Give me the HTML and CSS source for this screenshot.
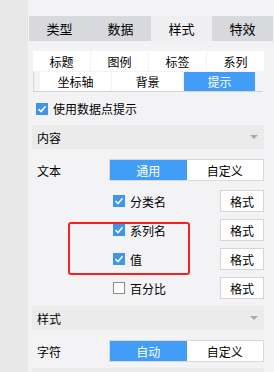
FILE: index.html
```html
<!DOCTYPE html>
<html lang="zh">
<head>
  <meta charset="UTF-8">
  <title>图表属性</title>
  <link rel="stylesheet" href="styles.css">
</head>
<body>
  <div class="layout">
    <div class="side"></div>

    <div class="panel">
      <!-- main tabs -->
      <div class="tabs">
        <div class="tab">类型</div>
        <div class="tab">数据</div>
        <div class="tab active">样式</div>
        <div class="tab">特效</div>
      </div>

      <!-- sub tabs -->
      <div class="subtabs">
        <div class="subrow">
          <div class="subtab">标题</div>
          <div class="subtab">图例</div>
          <div class="subtab">标签</div>
          <div class="subtab">系列</div>
        </div>
        <div class="subrow second">
          <div class="subtab">坐标轴</div>
          <div class="subtab">背景</div>
          <div class="subtab on">提示</div>
        </div>
      </div>

      <label class="check-row">
        <span class="box checked"><svg viewBox="0 0 12 12"><path d="M2.5 6.2 L5 8.6 L9.6 3.2" fill="none" stroke="#fff" stroke-width="1.6"/></svg></span>
        使用数据点提示
      </label>

      <div class="section">内容<span class="caret"></span></div>

      <div class="field">
        <div class="field-label">文本</div>
        <div class="seg">
          <div class="seg-item on">通用</div>
          <div class="seg-item">自定义</div>
        </div>
      </div>

      <div class="opts">
        <div class="opt">
          <label class="opt-check"><span class="box checked"><svg viewBox="0 0 12 12"><path d="M2.5 6.2 L5 8.6 L9.6 3.2" fill="none" stroke="#fff" stroke-width="1.6"/></svg></span>分类名</label>
          <button class="fmt">格式</button>
        </div>
        <div class="opt">
          <label class="opt-check"><span class="box checked"><svg viewBox="0 0 12 12"><path d="M2.5 6.2 L5 8.6 L9.6 3.2" fill="none" stroke="#fff" stroke-width="1.6"/></svg></span>系列名</label>
          <button class="fmt">格式</button>
        </div>
        <div class="opt">
          <label class="opt-check"><span class="box checked"><svg viewBox="0 0 12 12"><path d="M2.5 6.2 L5 8.6 L9.6 3.2" fill="none" stroke="#fff" stroke-width="1.6"/></svg></span>值</label>
          <button class="fmt">格式</button>
        </div>
        <div class="opt">
          <label class="opt-check"><span class="box"></span>百分比</label>
          <button class="fmt">格式</button>
        </div>
      </div>

      <div class="section style-sec">样式<span class="caret"></span></div>

      <div class="field">
        <div class="field-label">字符</div>
        <div class="seg">
          <div class="seg-item on">自动</div>
          <div class="seg-item">自定义</div>
        </div>
      </div>

      <div class="section next"></div>
    </div>
  </div>

  <!-- highlight annotation -->
  <div class="mark"></div>
</body>
</html>
```

FILE: styles.css
```css
body {
  margin: 0;
  background-color: #f3f3f5;
  font-family: "Noto Sans CJK SC", "Noto Sans", sans-serif;
  font-size: 12px;
  color: #000;
  overflow: hidden;
}
.layout {
  display: flex;
  height: 372px;
  overflow: hidden;
}
.side {
  width: 28px;
  background-color: #e8e8e8;
}
.panel {
  flex: 1;
  padding: 16px 0 0 1px;
  overflow: hidden;
}
/* Main tabs */
.tabs {
  display: flex;
  height: 25px;
}
.tab {
  width: 61px;
  background-color: #d8d9dc;
  display: flex;
  align-items: center;
  justify-content: center;
  font-size: 13px;
}
.tab.active {
  background-color: #efeff1;
}
/* Sub tabs */
.subtabs {
  margin: 10px 0 0 4px;
  width: 231px;
}
.subrow {
  display: grid;
  grid-template-columns: repeat(4, 1fr);
  gap: 1px;
  height: 20px;
}
.subrow.second {
  grid-template-columns: repeat(3, 71px);
  margin-top: 1px;
  padding-left: 6px;
  border-left: 1px solid #d6d6d6;
  border-bottom: 1px solid #d6d6d6;
  width: 223px;
  height: 19px;
}
.subtab {
  background-color: #fff;
  display: flex;
  align-items: center;
  justify-content: center;
}
.subtab.on {
  background-color: #419df6;
  color: #fff;
}
/* Checkboxes */
.box {
  width: 12px;
  height: 12px;
  box-sizing: border-box;
  border: 1px solid #8a8a8a;
  background-color: #fff;
  display: inline-block;
  flex-shrink: 0;
}
.box svg {
  display: block;
  width: 12px;
  height: 12px;
}
.box.checked {
  border: none;
  background-color: #3d95ee;
}
.check-row {
  display: flex;
  align-items: center;
  gap: 5px;
  height: 33px;
  margin-left: 7px;
}
/* Section headers */
.section {
  margin-left: 3px;
  width: 227px;
  height: 24px;
  padding-left: 5px;
  background-color: #ebebeb;
  display: flex;
  align-items: center;
  justify-content: space-between;
}
.caret {
  width: 0;
  height: 0;
  border-left: 4px solid transparent;
  border-right: 4px solid transparent;
  border-top: 4px solid #a9a9a9;
  margin-right: 6px;
}
.style-sec {
  margin-top: 7px;
}
.section.next {
  margin-top: 6px;
}
/* Field rows */
.field {
  display: flex;
  align-items: center;
  margin: 10px 0 0 8px;
}
.field-label {
  width: 72px;
}
.seg {
  display: flex;
  width: 153px;
  height: 20px;
  border: 1px solid #d9d9d9;
  background-color: #fff;
}
.seg-item {
  flex: 1;
  display: flex;
  align-items: center;
  justify-content: center;
}
.seg-item.on {
  background-color: #419df6;
  color: #fff;
}
/* Option list */
.opts {
  margin: 9px 0 0 84px;
  width: 151px;
  display: flex;
  flex-direction: column;
  gap: 7px;
}
.opt {
  display: flex;
  align-items: center;
  justify-content: space-between;
  height: 22px;
}
.opt-check {
  display: flex;
  align-items: center;
  gap: 5px;
}
.fmt {
  width: 44px;
  height: 22px;
  border: 1px solid #d6d6d6;
  background-color: #fff;
  font-family: inherit;
  font-size: 12px;
  color: #000;
  padding: 0;
}
/* Red annotation box */
.mark {
  position: absolute;
  left: 68px;
  top: 222px;
  width: 118px;
  height: 49px;
  border: 2px solid #fa2020;
  border-radius: 3px;
}
```
